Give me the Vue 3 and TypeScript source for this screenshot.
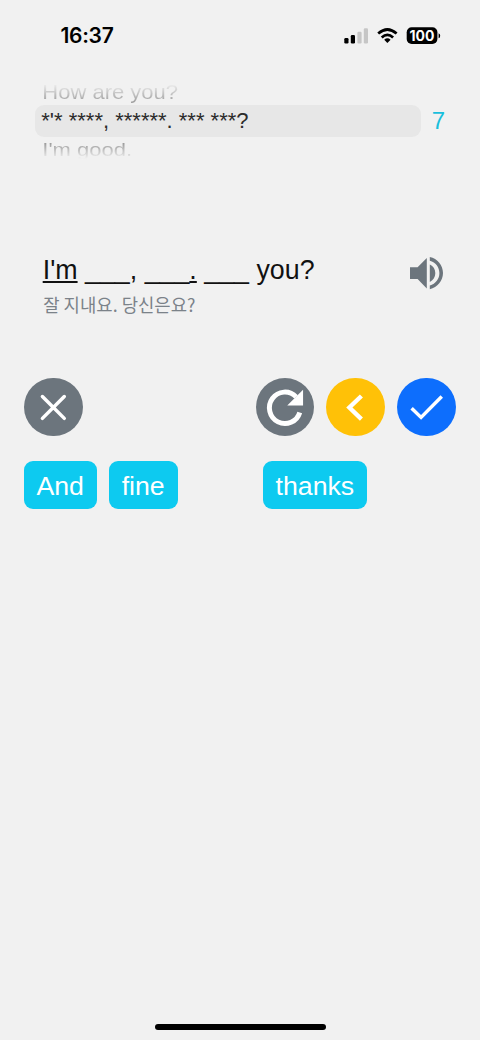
<script setup lang="ts">
interface Part {
  text: string
  kind?: 'underlined' | 'blank'
}

interface Slot {
  word: string
  width: number
}

const sentence: Part[] = [
  { text: "I'm", kind: 'underlined' },
  { text: ' ' },
  { text: '___', kind: 'blank' },
  { text: ', ' },
  { text: '___', kind: 'blank' },
  { text: '.', kind: 'underlined' },
  { text: ' ' },
  { text: '___', kind: 'blank' },
  { text: ' you?' },
]

const slots: Slot[] = [
  { word: 'And', width: 73.4 },
  { word: 'fine', width: 68.5 },
  { word: '', width: 61.5 },
  { word: 'thanks', width: 104 },
]
</script>

<template>
  <main class="screen">
    <header class="status">
      <span class="clock">16:37</span>
      <svg class="indicators" width="98" height="20" viewBox="0 0 98 20">
        <rect x="0.3" y="12" width="4.2" height="5.5" rx="1.2" />
        <rect x="6.8" y="9" width="4.2" height="8.5" rx="1.2" />
        <rect class="weak" x="13.4" y="5.8" width="4.2" height="11.7" rx="1.2" />
        <rect class="weak" x="19.8" y="2.3" width="4.2" height="15.2" rx="1.2" />
        <g class="waves">
          <path d="M34.2 7.6Q43.4 -.6 52.6 7.6" />
          <path d="M37.7 11.4Q43.4 6.2 49.1 11.4" />
        </g>
        <path d="M40.2 13.7Q43.4 11 46.6 13.7L43.4 17.1Z" />
        <rect x="62.7" y="1.3" width="30.7" height="16.7" rx="5" />
        <path d="M94.6 7.2Q96.2 7.7 96.2 9.7T94.6 12.2Z" />
        <text class="level" x="78" y="14.6" text-anchor="middle">100</text>
      </svg>
    </header>

    <section class="picker">
      <div class="wheel">
        <div class="row above">How are you?</div>
        <div class="row current">*'* ****, ******. *** ***?</div>
        <div class="row below">I'm good.</div>
      </div>
      <span class="count">7</span>
    </section>

    <section class="prompt">
      <div>
        <p class="sentence"><span v-for="(p, i) in sentence" :key="i" :class="p.kind">{{ p.text }}</span></p>
        <p class="translation">잘 지내요. 당신은요?</p>
      </div>
      <svg class="speaker" width="35" height="34" viewBox="0 0 35 34">
        <path d="M1 11.2H8.6L17.8 2V32.4L8.6 23H1Z" />
        <path d="M20.8 8.4C24.5 10 26.3 13.2 26.3 17.1S24.5 24.3 20.8 25.9Z" />
        <path d="M20.8 1.1C28.5 2.8 34 9.3 34 17.1S28.5 31.5 20.8 33.2V29.6C26.7 27.9 30.4 23 30.4 17.1S26.7 6.4 20.8 4.7Z" />
      </svg>
    </section>

    <nav class="actions">
      <button class="round gray" aria-label="Close">
        <svg viewBox="0 0 59 59"><path class="line cap" d="M18.5 18.6L40.5 40.6M40.5 18.6L18.5 40.6" /></svg>
      </button>
      <div class="group">
        <button class="round gray" aria-label="Restart">
          <svg viewBox="0 0 59 59">
            <path class="line heavy" d="M44 34.6A15.6 15.8 0 1 1 40.3 19" />
            <path class="solid" d="M47.3 11.8V27.7H31.4Z" />
          </svg>
        </button>
        <button class="round amber" aria-label="Back">
          <svg viewBox="0 0 59 59"><path class="line chevron" d="M35.6 18.1L23.5 29.7L35.6 41.3" /></svg>
        </button>
        <button class="round blue" aria-label="Check">
          <svg viewBox="0 0 59 59"><path class="line" d="M14.7 30.3L24.2 39.6L45 18.7" /></svg>
        </button>
      </div>
    </nav>

    <section class="words">
      <span v-for="(s, i) in slots" :key="i" :class="s.word ? 'chip' : 'vacant'" :style="{ width: s.width + 'px' }">{{ s.word }}</span>
    </section>

    <div class="home"></div>
  </main>
</template>

<style>
body {
  margin: 0;
  background: #f1f1f1;
}
</style>

<style scoped>
.screen {
  box-sizing: border-box;
  width: 480px;
  height: 1040px;
  display: flex;
  flex-direction: column;
  background: #f1f1f1;
  color: #111;
  font-family: "Liberation Sans", "Noto Sans CJK KR", sans-serif;
  overflow: hidden;
}
.status {
  height: 78px;
  flex: none;
  display: flex;
  justify-content: space-between;
  padding: 0 38px 0 60.5px;
  box-sizing: border-box;
}
.clock {
  margin-top: 22px;
  font: 600 21px/28px Inter, sans-serif;
  letter-spacing: -0.3px;
  color: #000;
}
.indicators {
  margin-top: 26px;
}
.weak {
  fill: #c6c6c6;
}
.waves {
  fill: none;
  stroke: #000;
  stroke-width: 2.7;
}
.level {
  fill: #fff;
  font: 700 14px Inter, sans-serif;
}
.picker {
  display: flex;
  height: 86px;
  flex: none;
  padding-left: 35.3px;
}
.wheel {
  width: 385.5px;
  padding-top: 2px;
}
.row {
  height: 25px;
  line-height: 25px;
  font-size: 22px;
  padding-left: 7px;
  white-space: pre;
}
.above {
  transform: scaleY(0.88);
  background: linear-gradient(#f1f1f1 8%, #a2a2a2 90%);
  background-clip: text;
  -webkit-background-clip: text;
  color: transparent;
}
.current {
  height: 32px;
  line-height: 32px;
  padding-left: 6px;
  border-radius: 9px;
  background: #e7e7e7;
  color: #2c2c2c;
}
.below {
  transform: scaleY(0.86);
  line-height: 26px;
  background: linear-gradient(#9c9c9c 20%, #f1f1f1 94%);
  background-clip: text;
  -webkit-background-clip: text;
  color: transparent;
}
.count {
  margin: 27px 0 0 11px;
  height: 32px;
  font-size: 24px;
  line-height: 32px;
  color: #19bfdc;
}
.prompt {
  height: 213.5px;
  flex: none;
  box-sizing: border-box;
  display: flex;
  justify-content: space-between;
  padding: 90px 36px 0 42.7px;
}
.sentence {
  margin: 0;
  height: 33px;
  font-size: 26.8px;
  line-height: 33px;
  white-space: pre;
}
.underlined {
  text-decoration: underline;
  text-decoration-thickness: 2px;
  text-underline-offset: 2px;
}
.blank {
  line-height: 20px;
  vertical-align: 1px;
}
.translation {
  margin: 4px 0 0 0.6px;
  font: 17.8px/26px "Noto Sans CJK KR", sans-serif;
  color: #7b8289;
}
.speaker {
  margin-top: 2px;
  fill: #6c757d;
}
.actions {
  display: flex;
  justify-content: space-between;
  padding: 0 24px;
}
.group {
  display: flex;
  gap: 12.2px;
}
.round {
  width: 58.7px;
  height: 58.7px;
  padding: 0;
  border: 0;
  border-radius: 50%;
}
.round svg {
  display: block;
  width: 58.7px;
  height: 58.7px;
}
.gray {
  background: #6c757d;
}
.amber {
  background: #ffc107;
}
.blue {
  background: #0d6efd;
}
.line {
  fill: none;
  stroke: #fff;
  stroke-width: 3.5;
}
.cap {
  stroke-linecap: round;
}
.heavy {
  stroke-width: 5;
}
.chevron {
  stroke-width: 4.4;
}
.solid {
  fill: #fff;
}
.words {
  display: flex;
  gap: 12px;
  padding: 24.5px 24px 0;
}
.chip {
  height: 48.7px;
  border-radius: 9px;
  background: #0dcaf0;
  color: #fff;
  font-size: 26.7px;
  line-height: 50px;
  text-align: center;
  text-indent: -1px;
}
.home {
  width: 171px;
  height: 6px;
  margin: auto auto 10px;
  border-radius: 3px;
  background: #000;
}
</style>
